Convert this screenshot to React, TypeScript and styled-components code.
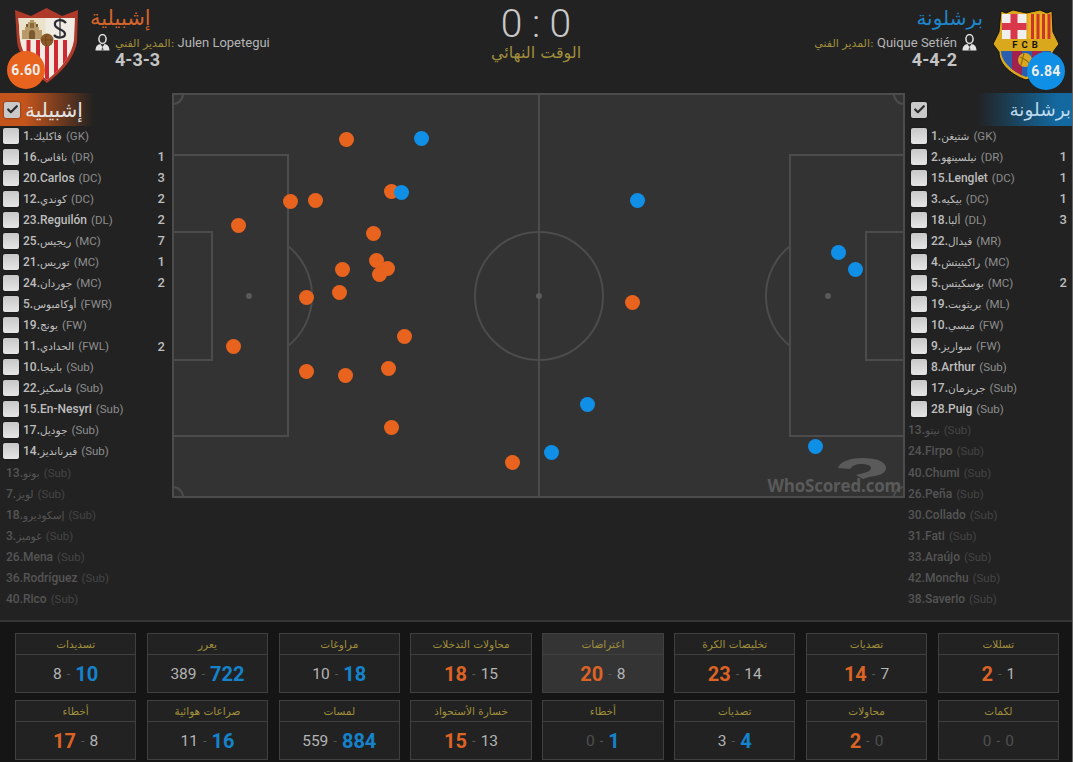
import React from 'react'
import styled, { createGlobalStyle } from 'styled-components'
import { Check } from 'lucide-react'

const ORANGE = '#e8641e'
const BLUE = '#0f8fe6'
const GOLD = '#a08f3c'

const GlobalStyle = createGlobalStyle`
  html, body {
    margin: 0;
    padding: 0;
    background: #fff;
    overflow: hidden;
  }
  * {
    box-sizing: border-box;
  }
`

const Page = styled.div`
  width: 1073px;
  height: 762px;
  background: #222;
  border-right: 1px solid #666;
  font-family: Roboto, "DejaVu Sans", sans-serif;
  display: flex;
  flex-direction: column;
  overflow: hidden;
`

const Header = styled.header`
  height: 93px;
  display: grid;
  grid-template-columns: 1fr auto 1fr;
`

const TeamSide = styled.div<{ $away?: boolean }>`
  display: flex;
  flex-direction: ${p => (p.$away ? 'row-reverse' : 'row')};
  padding: ${p => (p.$away ? '10px 12px 0 0' : '8px 0 0 15px')};
  gap: ${p => (p.$away ? '10px' : '11px')};
`

const CrestWrap = styled.div`
  position: relative;
  height: 75px;
`

const Rating = styled.div<{ $away?: boolean }>`
  position: absolute;
  top: ${p => (p.$away ? '42px' : '43px')};
  left: ${p => (p.$away ? '34px' : '-8px')};
  width: 38px;
  height: 38px;
  border-radius: 50%;
  background: ${p => (p.$away ? BLUE : ORANGE)};
  color: #eee;
  font-size: 14px;
  font-weight: 700;
  letter-spacing: 0.3px;
  display: flex;
  align-items: center;
  justify-content: center;
`

const TeamInfo = styled.div<{ $away?: boolean }>`
  display: flex;
  flex-direction: column;
  align-items: ${p => (p.$away ? 'flex-end' : 'flex-start')};
  padding-top: ${p => (p.$away ? '0' : '2px')};
  margin-top: -5px;
`

const TeamName = styled.div<{ $away?: boolean }>`
  font-family: "DejaVu Sans", sans-serif;
  font-size: ${p => (p.$away ? '20px' : '21px')};
  line-height: 26px;
  color: ${p => (p.$away ? '#1f85c8' : '#d3642c')};
`

const ManagerRow = styled.div<{ $away?: boolean }>`
  display: flex;
  flex-direction: ${p => (p.$away ? 'row-reverse' : 'row')};
  align-items: center;
  gap: 5px;
  margin: ${p => (p.$away ? '2px 6px 0 0' : '2px 0 0 5px')};
  height: 18px;
`

const ManagerText = styled.div`
  font-size: 13px;
  color: #b5b5b5;
  white-space: nowrap;
`

const ManagerLabel = styled.span`
  color: ${GOLD};
  font-family: "DejaVu Sans", sans-serif;
  font-size: 11px;
`

const Formation = styled.div<{ $away?: boolean }>`
  font-size: 18px;
  font-weight: 700;
  line-height: 18px;
  color: #c4c4c4;
  margin: ${p => (p.$away ? '0 26px 0 0' : '0 0 0 25px')};
`

const ScoreBox = styled.div`
  width: 100px;
  display: flex;
  flex-direction: column;
  align-items: center;
  padding-top: 3px;
`

const Score = styled.div`
  font-size: 39px;
  font-weight: 300;
  line-height: 42px;
  color: #c8c8c8;
  white-space: nowrap;
`

const MatchStatus = styled.div`
  font-family: "DejaVu Sans", sans-serif;
  font-size: 16px;
  line-height: 16px;
  color: ${GOLD};
  white-space: nowrap;
`

const Main = styled.main`
  flex: 1;
  display: flex;
`

const Roster = styled.section<{ $away?: boolean }>`
  width: ${p => (p.$away ? '167px' : '172px')};
  flex-shrink: 0;
  display: flex;
  flex-direction: column;
`

const RosterHead = styled.div<{ $away?: boolean }>`
  height: 33px;
  margin-bottom: -1px;
  display: flex;
  align-items: center;
  gap: 5px;
  padding: ${p => (p.$away ? '0 1px 0 6px' : '0 0 0 4px')};
  justify-content: ${p => (p.$away ? 'space-between' : 'flex-start')};
  background: ${p =>
    p.$away
      ? 'linear-gradient(to left, #12689f 0, #12689f 15px, rgba(18,104,159,0) 95px)'
      : 'linear-gradient(to right, #c2541c 0, #c2541c 25px, rgba(194,84,28,0) 94px)'};
`

const RosterTitle = styled.div<{ $away?: boolean }>`
  font-family: "DejaVu Sans", sans-serif;
  font-size: ${p => (p.$away ? '18.5px' : '20px')};
  color: ${p => (p.$away ? '#bcd9ec' : '#e4e4e4')};
`

const Box = styled.span<{ $checked?: boolean }>`
  width: 16px;
  height: 16px;
  flex-shrink: 0;
  border-radius: 2px;
  background: ${p => (p.$checked ? '#c9c9c9' : 'linear-gradient(#c8c8c8, #e6e6e6)')};
  box-shadow: 0 0 2px rgba(0, 0, 0, 0.6);
  color: #2a2a2a;
  display: flex;
  align-items: center;
  justify-content: center;
`

const PlayerRow = styled.div<{ $away?: boolean; $dim?: boolean }>`
  height: 21.07px;
  display: flex;
  align-items: center;
  gap: 4px;
  white-space: nowrap;
  padding-left: ${p => (p.$dim ? (p.$away ? '3px' : '6px') : p.$away ? '6px' : '3px')};
  padding-right: ${p => (p.$away ? '5px' : '7px')};
  opacity: ${p => (p.$dim ? 0.32 : 1)};
`

const PlayerName = styled.span`
  font-size: 12px;
  font-weight: 500;
  color: #bdbdbd;
`

const ArabicName = styled.span`
  font-family: "DejaVu Sans", sans-serif;
  font-size: 10.5px;
  font-weight: 400;
`

const Position = styled.span`
  font-size: 11.5px;
  color: #8d8d8d;
`

const RatingCount = styled.span`
  margin-left: auto;
  font-size: 13px;
  font-weight: 500;
  color: #bdbdbd;
`

const Pitch = styled.div`
  position: relative;
  width: 733px;
  height: 405px;
  flex-shrink: 0;
  background: #333;
`

const PitchLines = styled.svg`
  display: block;
  width: 733px;
  height: 405px;
`

const Dot = styled.span<{ $away?: boolean }>`
  position: absolute;
  width: 15px;
  height: 15px;
  margin: -7.5px 0 0 -7.5px;
  border-radius: 50%;
  background: ${p => (p.$away ? BLUE : ORANGE)};
`

const Watermark = styled.div`
  position: absolute;
  right: 4px;
  bottom: 2px;
  display: flex;
  flex-direction: column;
  align-items: flex-end;
`

const WatermarkMark = styled.svg`
  display: block;
  margin: 0 14px -8px 0;
`

const WatermarkText = styled.div`
  font-family: "Open Sans", sans-serif;
  font-size: 17px;
  font-weight: 700;
  line-height: 20px;
  letter-spacing: -0.2px;
  color: #5a5a5a;
`

const Footer = styled.footer`
  height: 142px;
  flex-shrink: 0;
  background: #151515;
  border-top: 2px solid #363636;
  padding: 11px 13px 0 15px;
  display: grid;
  grid-template-columns: repeat(8, 1fr);
  grid-auto-rows: 60px;
  gap: 7px 10.5px;
`

const StatCard = styled.div<{ $active?: boolean }>`
  border: 1px solid #404040;
  background: ${p => (p.$active ? '#343434' : '#222')};
  display: flex;
  flex-direction: column;
`

const StatLabel = styled.div`
  height: 21px;
  flex-shrink: 0;
  border-bottom: 1px solid #404040;
  font-family: "DejaVu Sans", sans-serif;
  font-size: 10.5px;
  color: ${GOLD};
  display: flex;
  align-items: center;
  justify-content: center;
  white-space: nowrap;
`

const StatValues = styled.div`
  flex: 1;
  display: flex;
  align-items: center;
  justify-content: center;
  gap: 5px;
`

const StatNum = styled.span<{ $tone: 'home' | 'away' | 'plain' | 'dim' }>`
  font-size: ${p => (p.$tone === 'home' || p.$tone === 'away' ? '20px' : '15.5px')};
  font-weight: ${p => (p.$tone === 'home' || p.$tone === 'away' ? 700 : 400)};
  color: ${p =>
    p.$tone === 'home' ? '#dc6326' : p.$tone === 'away' ? '#1583cc' : p.$tone === 'dim' ? '#4e4e4e' : '#b4b4b4'};
`

const StatDash = styled.span`
  font-size: 13px;
  color: #555;
`

type Player = { name: string; pos: string; count?: number; on?: boolean }

const homePlayers: Player[] = [
  { name: '1.فاكليك', pos: 'GK', on: true },
  { name: '16.نافاس', pos: 'DR', count: 1, on: true },
  { name: '20.Carlos', pos: 'DC', count: 3, on: true },
  { name: '12.كوندي', pos: 'DC', count: 2, on: true },
  { name: '23.Reguilón', pos: 'DL', count: 2, on: true },
  { name: '25.ريجيس', pos: 'MC', count: 7, on: true },
  { name: '21.توريس', pos: 'MC', count: 1, on: true },
  { name: '24.جوردان', pos: 'MC', count: 2, on: true },
  { name: '5.أوكامبوس', pos: 'FWR', on: true },
  { name: '19.يونج', pos: 'FW', on: true },
  { name: '11.الحدادي', pos: 'FWL', count: 2, on: true },
  { name: '10.بانيجا', pos: 'Sub', on: true },
  { name: '22.فاسكيز', pos: 'Sub', on: true },
  { name: '15.En-Nesyri', pos: 'Sub', on: true },
  { name: '17.جوديل', pos: 'Sub', on: true },
  { name: '14.فيرنانديز', pos: 'Sub', on: true },
  { name: '13.بونو', pos: 'Sub' },
  { name: '7.لويز', pos: 'Sub' },
  { name: '18.إسكوديرو', pos: 'Sub' },
  { name: '3.غوميز', pos: 'Sub' },
  { name: '26.Mena', pos: 'Sub' },
  { name: '36.Rodríguez', pos: 'Sub' },
  { name: '40.Rico', pos: 'Sub' },
]

const awayPlayers: Player[] = [
  { name: '1.شتيغن', pos: 'GK', on: true },
  { name: '2.نيلسينهو', pos: 'DR', count: 1, on: true },
  { name: '15.Lenglet', pos: 'DC', count: 1, on: true },
  { name: '3.بيكيه', pos: 'DC', count: 1, on: true },
  { name: '18.ألبا', pos: 'DL', count: 3, on: true },
  { name: '22.فيدال', pos: 'MR', on: true },
  { name: '4.راكيتيتش', pos: 'MC', on: true },
  { name: '5.بوسكيتس', pos: 'MC', count: 2, on: true },
  { name: '19.بريثويت', pos: 'ML', on: true },
  { name: '10.ميسي', pos: 'FW', on: true },
  { name: '9.سواريز', pos: 'FW', on: true },
  { name: '8.Arthur', pos: 'Sub', on: true },
  { name: '17.جريزمان', pos: 'Sub', on: true },
  { name: '28.Puig', pos: 'Sub', on: true },
  { name: '13.نيتو', pos: 'Sub' },
  { name: '24.Firpo', pos: 'Sub' },
  { name: '40.Chumi', pos: 'Sub' },
  { name: '26.Peña', pos: 'Sub' },
  { name: '30.Collado', pos: 'Sub' },
  { name: '31.Fati', pos: 'Sub' },
  { name: '33.Araújo', pos: 'Sub' },
  { name: '42.Monchu', pos: 'Sub' },
  { name: '38.Saverio', pos: 'Sub' },
]

// page coordinates of the touches, minus the pitch origin when drawn
const homeDots = [
  [346, 139], [290, 201], [315, 200], [391, 191], [238, 225], [373, 233], [376, 260],
  [387, 268], [379, 274], [342, 269], [339, 292], [306, 297], [233, 346], [404, 336],
  [306, 371], [345, 375], [388, 368], [391, 427], [632, 302], [512, 462],
]
const awayDots = [
  [421, 138], [401, 192], [637, 200], [838, 252], [855, 269], [587, 404], [551, 452], [815, 446],
]

const stats: [string, number, number][] = [
  ['تسديدات', 8, 10],
  ['يعرر', 389, 722],
  ['مراوغات', 10, 18],
  ['محاولات التدخلات', 18, 15],
  ['اعتراضات', 20, 8],
  ['تخليصات الكرة', 23, 14],
  ['تصديات', 14, 7],
  ['تسللات', 2, 1],
  ['أخطاء', 17, 8],
  ['صراعات هوائية', 11, 16],
  ['لمسات', 559, 884],
  ['خسارة الأستحواذ', 15, 13],
  ['أخطاء', 0, 1],
  ['تصديات', 3, 4],
  ['محاولات', 2, 0],
  ['لكمات', 0, 0],
]

const SevillaCrest = () => (
  <svg width="64" height="75" viewBox="0 0 64 75">
    <defs>
      <clipPath id="sev">
        <path d="M3.5 10 H60 L59 32 C57 47 45 62 32 72 C19 62 7 47 5 32 Z" />
      </clipPath>
    </defs>
    <path d="M0 2 L16 8 L31.5 0 L47 8 L63 2 L62 33 C60 50 46 65 32 75 C18 65 4 50 2 33 Z" fill="#b03a2a" />
    <path d="M3.5 10 H60 L59 32 C57 47 45 62 32 72 C19 62 7 47 5 32 Z" fill="#f0ece4" />
    <g clipPath="url(#sev)">
      <rect x="3" y="10" width="27.5" height="22" fill="#ebe2cb" />
      <path d="M7 31 V22 H10 V19 H13 V14 H15 V12 H19 V14 H21 V19 H24 V22 H27 V31 Z" fill="#b89a6a" />
      <rect x="11" y="16" width="2" height="3" fill="#7b5a32" />
      <rect x="15" y="15" width="4" height="5" fill="#8a6a3c" />
      <rect x="21" y="16" width="2" height="3" fill="#7b5a32" />
      <path d="M14 31 V25 A3 3 0 0 1 20 25 V31 Z" fill="#7b5a32" />
      <rect x="11.5" y="32" width="4" height="42" fill="#cf2a33" />
      <rect x="21" y="32" width="4" height="42" fill="#cf2a33" />
      <rect x="30" y="32" width="4" height="42" fill="#cf2a33" />
      <rect x="39" y="32" width="4" height="42" fill="#cf2a33" />
      <rect x="48" y="32" width="4" height="42" fill="#cf2a33" />
    </g>
    <path d="M51 15 C47 10 39 12 40 17 C41 22 50 21 50 26 C50 30 42 31 39 27" fill="none" stroke="#2b2b33" strokeWidth="2.2" />
    <path d="M45 10 V30" fill="none" stroke="#2b2b33" strokeWidth="1.2" />
    <circle cx="32" cy="32" r="6.5" fill="#8a5a28" />
    <path d="M26 32 H38 M32 26 C30 29 30 35 32 38" fill="none" stroke="#6e4419" strokeWidth="0.9" />
  </svg>
)

const BarcaCrest = () => (
  <svg width="67" height="72" viewBox="0 0 67 72">
    <defs>
      <clipPath id="barcaLow">
        <path d="M8 41 H58 C58 52 46 62 33 67 C20 62 8 52 8 41 Z" />
      </clipPath>
    </defs>
    <path
      d="M8 1 L13 3 L20 0 L33.5 3 L47 0 L54 3 L59 1 L60 22 L66 34 L60 42 C60 55 47 65 33 70 C19 65 6 55 6 42 L0 34 L6 22 Z"
      fill="#d9a81c"
      stroke="#14120a"
      strokeWidth="1"
    />
    <rect x="9" y="4" width="24.5" height="25" fill="#f1eeee" />
    <rect x="17.5" y="4" width="7" height="25" fill="#d8384a" />
    <rect x="9" y="13" width="24.5" height="7" fill="#d8384a" />
    <rect x="35" y="4" width="23" height="25" fill="#eeb31f" />
    <rect x="38" y="4" width="3" height="25" fill="#c9362b" />
    <rect x="43.5" y="4" width="3" height="25" fill="#c9362b" />
    <rect x="49" y="4" width="3" height="25" fill="#c9362b" />
    <rect x="54.5" y="4" width="3" height="25" fill="#c9362b" />
    <text x="34" y="38" textAnchor="middle" fontFamily="Roboto, sans-serif" fontSize="9.5" fontWeight="700" letterSpacing="4" fill="#14120a">FCB</text>
    <path d="M8 41 H58 C58 52 46 62 33 67 C20 62 8 52 8 41 Z" fill="#2b5fae" />
    <g clipPath="url(#barcaLow)">
      <rect x="19" y="40" width="10" height="28" fill="#a0234f" />
      <rect x="39" y="40" width="10" height="28" fill="#a0234f" />
    </g>
    <circle cx="32" cy="50" r="7" fill="#dca720" />
    <path d="M27 47 C31 49 34 50 37 54 M31 43 C30 47 29 51 28 55" stroke="#8d6a10" strokeWidth="1.1" fill="none" />
  </svg>
)

const ManagerIcon = () => (
  <svg width="15" height="17" viewBox="0 0 15 17">
    <ellipse cx="7.5" cy="5" rx="3.6" ry="4.4" fill="#2a2a2a" stroke="#e3e3e3" strokeWidth="1.5" />
    <path d="M0.5 16.5 C0.5 12 3 10.5 5.5 10 L7.5 13 L9.5 10 C12 10.5 14.5 12 14.5 16.5 Z" fill="#e3e3e3" />
    <path d="M7 13.5 H8 L8.5 16.5 H6.5 Z" fill="#555" />
  </svg>
)

const isArabic = (text: string) => /[\u0600-\u06ff]/.test(text)

const RosterList = ({ players, away }: { players: Player[]; away?: boolean }) => (
  <>
    {players.map(player => {
      const [shirt, name] = player.name.split('.')
      return (
        <PlayerRow key={player.name} $away={away} $dim={!player.on}>
          {player.on && <Box />}
          <PlayerName>
            {shirt}.{isArabic(name) ? <ArabicName>{name}</ArabicName> : name}
          </PlayerName>
          <Position>({player.pos})</Position>
          {player.count && <RatingCount>{player.count}</RatingCount>}
        </PlayerRow>
      )
    })}
  </>
)

const toneFor = (mine: number, other: number, side: 'home' | 'away') => {
  if (mine === 0) return 'dim'
  return mine > other ? side : 'plain'
}

export default function App() {
  return (
    <Page>
      <GlobalStyle />
      <Header>
        <TeamSide>
          <CrestWrap>
            <SevillaCrest />
            <Rating>6.60</Rating>
          </CrestWrap>
          <TeamInfo>
            <TeamName>إشبيلية</TeamName>
            <ManagerRow>
              <ManagerIcon />
              <ManagerText>
                <ManagerLabel>المدير الفني:</ManagerLabel> Julen Lopetegui
              </ManagerText>
            </ManagerRow>
            <Formation>4-3-3</Formation>
          </TeamInfo>
        </TeamSide>
        <ScoreBox>
          <Score>0 : 0</Score>
          <MatchStatus>الوقت النهائي</MatchStatus>
        </ScoreBox>
        <TeamSide $away>
          <CrestWrap>
            <BarcaCrest />
            <Rating $away>6.84</Rating>
          </CrestWrap>
          <TeamInfo $away>
            <TeamName $away>برشلونة</TeamName>
            <ManagerRow $away>
              <ManagerIcon />
              <ManagerText>
                <ManagerLabel>المدير الفني:</ManagerLabel> Quique Setién
              </ManagerText>
            </ManagerRow>
            <Formation $away>4-4-2</Formation>
          </TeamInfo>
        </TeamSide>
      </Header>

      <Main>
        <Roster>
          <RosterHead>
            <Box $checked>
              <Check size={13} strokeWidth={4} />
            </Box>
            <RosterTitle>إشبيلية</RosterTitle>
          </RosterHead>
          <RosterList players={homePlayers} />
        </Roster>

        <Pitch>
          <PitchLines viewBox="0 0 733 405" fill="none" stroke="#4c4c4c" strokeWidth="2">
            <rect x="1" y="1" width="731" height="403" />
            <line x1="367" y1="1" x2="367" y2="404" />
            <circle cx="367" cy="203" r="64" />
            <rect x="1" y="62" width="115" height="281" />
            <rect x="1" y="139" width="39" height="128" />
            <rect x="618" y="62" width="114" height="281" />
            <rect x="694" y="139" width="38" height="128" />
            <path d="M116 153 A64 64 0 0 1 116 253" />
            <path d="M618 153 A64 64 0 0 0 618 253" />
            <path d="M1 11 A10 10 0 0 0 11 1 M722 1 A10 10 0 0 0 732 11 M1 394 A10 10 0 0 1 11 404 M722 404 A10 10 0 0 1 732 394" />
            <circle cx="77" cy="203" r="3" fill="#5a5a5a" stroke="none" />
            <circle cx="367" cy="203" r="3" fill="#5a5a5a" stroke="none" />
            <circle cx="656" cy="203" r="3" fill="#5a5a5a" stroke="none" />
          </PitchLines>
          {homeDots.map(([x, y]) => (
            <Dot key={`h${x}-${y}`} style={{ left: x - 172, top: y - 93 }} />
          ))}
          {awayDots.map(([x, y]) => (
            <Dot key={`a${x}-${y}`} $away style={{ left: x - 172, top: y - 93 }} />
          ))}
          <Watermark>
            <WatermarkMark width="50" height="26" viewBox="0 0 50 26">
              <path
                d="M1 10 C3 3 14 0 26 0 C40 0 49 4 49 10 C49 16 40 18 32 19 L26 21 L19 17 C26 15 34 14 34 10 C34 7 29 6 24 6 C19 6 15 8 13 11 Z"
                fill="#5a5a5a"
              />
            </WatermarkMark>
            <WatermarkText>WhoScored.com</WatermarkText>
          </Watermark>
        </Pitch>

        <Roster $away>
          <RosterHead $away>
            <Box $checked>
              <Check size={13} strokeWidth={4} />
            </Box>
            <RosterTitle $away>برشلونة</RosterTitle>
          </RosterHead>
          <RosterList players={awayPlayers} away />
        </Roster>
      </Main>

      <Footer>
        {stats.map(([label, home, away], i) => (
          <StatCard key={i} $active={i === 4}>
            <StatLabel>{label}</StatLabel>
            <StatValues>
              <StatNum $tone={toneFor(home, away, 'home')}>{home}</StatNum>
              <StatDash>-</StatDash>
              <StatNum $tone={toneFor(away, home, 'away')}>{away}</StatNum>
            </StatValues>
          </StatCard>
        ))}
      </Footer>
    </Page>
  )
}
